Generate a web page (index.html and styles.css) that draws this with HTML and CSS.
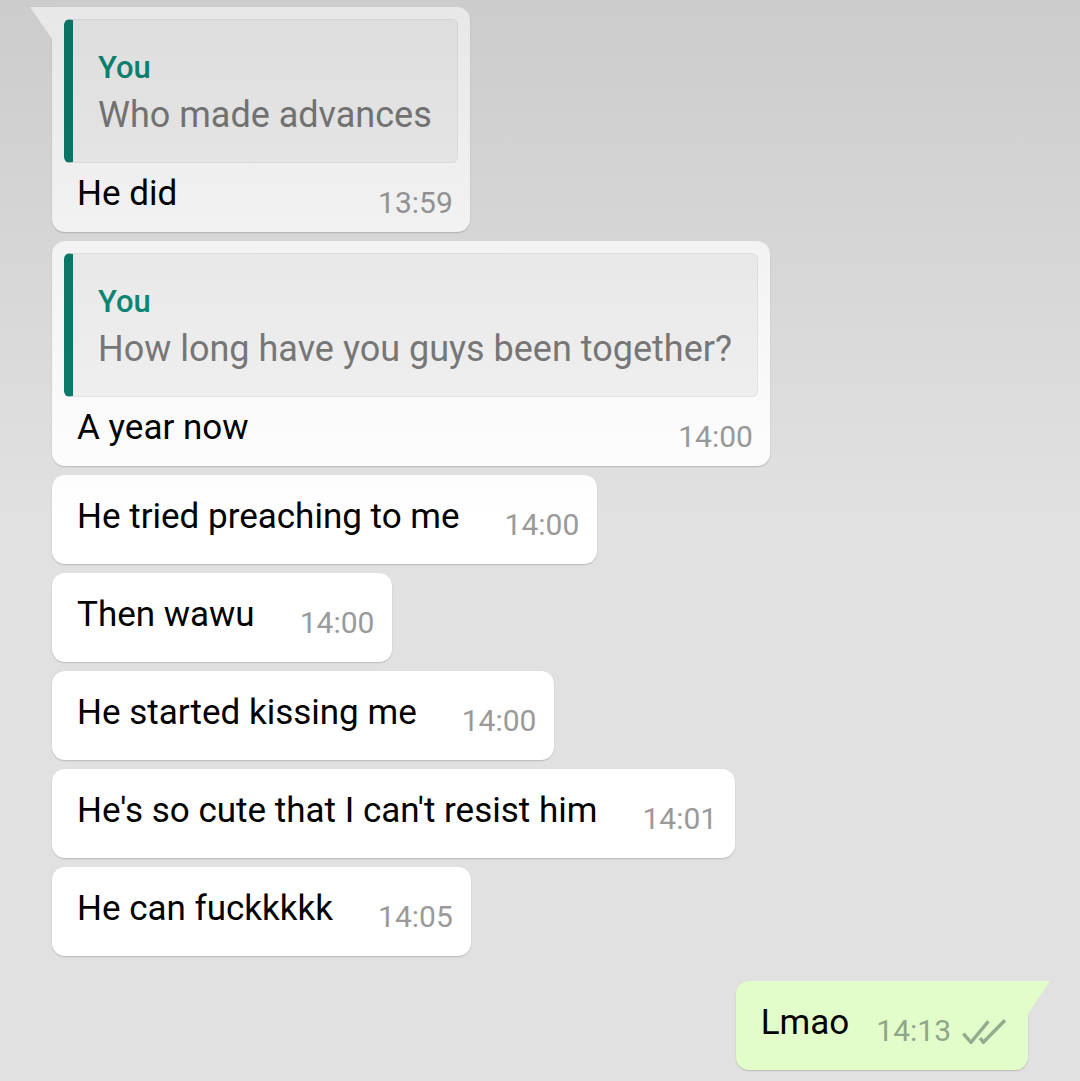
FILE: index.html
```html
<!DOCTYPE html>
<html lang="en">
<head>
<meta charset="utf-8">
<title>Chat</title>
<link rel="stylesheet" href="styles.css">
</head>
<body>
<div class="chat">
  <div class="bubble in quoted first">
    <div class="quote">
      <div class="q-name">You</div>
      <div class="q-text">Who made advances</div>
    </div>
    <div class="qrow"><span class="text">He did</span><span class="time">13:59</span></div>
  </div>
  <div class="bubble in quoted">
    <div class="quote">
      <div class="q-name">You</div>
      <div class="q-text">How long have you guys been together?</div>
    </div>
    <div class="qrow"><span class="text">A year now</span><span class="time">14:00</span></div>
  </div>
  <div class="bubble in single"><span class="text">He tried preaching to me</span><span class="time">14:00</span></div>
  <div class="bubble in single"><span class="text">Then wawu</span><span class="time">14:00</span></div>
  <div class="bubble in single"><span class="text">He started kissing me</span><span class="time">14:00</span></div>
  <div class="bubble in single"><span class="text">He's so cute that I can't resist him</span><span class="time">14:01</span></div>
  <div class="bubble in single"><span class="text">He can fuckkkkk</span><span class="time">14:05</span></div>
  <div class="bubble out single">
    <span class="text">Lmao</span><span class="time">14:13</span>
    <svg class="ticks" viewBox="0 0 46 26" width="46" height="26" aria-hidden="true">
      <polyline points="2.3,15.7 10,24.3 27.3,3.3" />
      <polyline points="19,20 22.3,24.3 44,2.3" />
    </svg>
  </div>
</div>
</body>
</html>
```

FILE: styles.css
```css
* {
  box-sizing: border-box;
}

html,
body {
  margin: 0;
  padding: 0;
}

body {
  width: 1080px;
  height: 1081px;
  overflow: hidden;
  position: relative;
  background: #e1e1e1;
  font-family: Roboto, "Noto Sans", sans-serif;
}

body::before {
  content: "";
  position: absolute;
  left: 0;
  top: 0;
  right: 0;
  height: 520px;
  background: linear-gradient(rgba(0, 0, 0, 0.095), rgba(0, 0, 0, 0));
  pointer-events: none;
  z-index: 5;
}

.chat {
  display: flex;
  flex-direction: column;
  align-items: flex-start;
  gap: 9px;
  padding: 7px 52px 0;
}

.bubble {
  position: relative;
  background: #ffffff;
  border-radius: 13px;
  box-shadow: 0 1px 1.5px rgba(0, 0, 0, 0.18);
}

.bubble.first {
  border-top-left-radius: 0;
}

.bubble.first::before {
  content: "";
  position: absolute;
  left: -22px;
  top: 0;
  width: 22px;
  height: 32px;
  background: #ffffff;
  clip-path: polygon(0 0, 100% 0, 100% 100%);
}

.single {
  display: flex;
  align-items: flex-end;
  height: 89px;
  padding: 21px 18px 26px 25px;
}

.text {
  font-size: 35px;
  line-height: 42px;
  color: #000000;
  white-space: nowrap;
}

.time {
  font-size: 30px;
  line-height: 30px;
  color: #9a9a9a;
  white-space: nowrap;
  margin-left: 45px;
  margin-bottom: -2px;
}

.quoted {
  padding: 12px 12px 17px;
}

.quote {
  background: rgba(0, 0, 0, 0.045);
  border: 1px solid rgba(0, 0, 0, 0.05);
  border-left: 9px solid #0b7d6c;
  border-radius: 6px;
  padding: 30px 25px 26px 25px;
}

.q-name {
  font-size: 31px;
  line-height: 36px;
  font-weight: 500;
  color: #0c8a77;
}

.q-text {
  font-size: 36px;
  line-height: 42px;
  color: #7a7a7a;
  margin-top: 8px;
  white-space: nowrap;
}

.qrow {
  display: flex;
  align-items: flex-end;
  margin-top: 10px;
  padding: 0 5px 0 13px;
}

.qrow .time {
  margin-left: auto;
  margin-bottom: -3px;
}

.out {
  align-self: flex-end;
  margin-top: 16px;
  background: #e2fcca;
  border-top-right-radius: 0;
  padding-right: 21px;
}

.out::after {
  content: "";
  position: absolute;
  right: -22px;
  top: 0;
  width: 22px;
  height: 33px;
  background: #e2fcca;
  clip-path: polygon(0 0, 100% 0, 0 100%);
}

.out .time {
  color: #8fa68b;
  margin-left: 27px;
}

.ticks {
  display: block;
  margin-left: 10px;
  fill: none;
  stroke: #93ab8f;
  stroke-width: 3.4;
  stroke-linecap: butt;
  stroke-linejoin: miter;
}
```
